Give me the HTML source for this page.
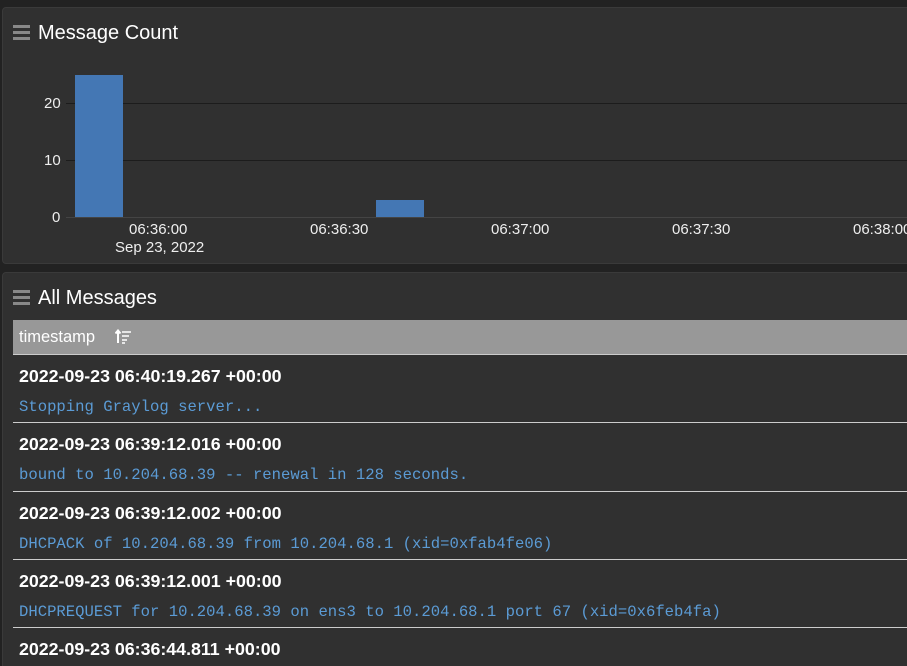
<!DOCTYPE html>
<html style="overflow:hidden"><head><style>
html,body{overflow:hidden}
body{margin:0;width:907px;height:666px;overflow:hidden;background:#222;font-family:"Liberation Sans",sans-serif;color:#fff;position:relative}
.p{position:absolute;left:2px;width:920px;background:#303030;border:1px solid #3a3a3a;border-radius:4px}
.t{position:absolute;left:38px;font-size:20px;color:#fff}
.ham{position:absolute;left:13px;width:17px;height:3px;background:#888;box-shadow:0 6px 0 #888,0 12px 0 #888}
.ax{position:absolute;font-size:15px;color:#eee}
.g{position:absolute;left:66px;width:850px;height:1px;background:#1c1c1c}
.row{position:absolute;left:13px;width:900px;border-top:1px solid #ccc;height:68px}
.ts{position:absolute;left:6px;top:11px;font-weight:bold;font-size:17.8px}
.m{position:absolute;left:6px;top:43px;font-family:"Liberation Mono",monospace;font-size:15.6px;color:#5b9bd5}
</style></head><body>
<div class="p" style="top:7px;height:255px"></div>
<div class="ham" style="top:25px"></div>
<div class="t" style="top:22px">Message Count</div>
<div class="g" style="top:103px"></div>
<div class="g" style="top:160px"></div>
<div class="g" style="top:217px;background:#444"></div>
<div class="ax" style="top:95px;left:44px">20</div>
<div class="ax" style="top:152px;left:44px">10</div>
<div class="ax" style="top:209px;left:52px">0</div>
<div style="position:absolute;left:75px;top:75px;width:48px;height:142px;background:#4477b4"></div>
<div style="position:absolute;left:376px;top:200px;width:48px;height:17px;background:#4477b4"></div>
<div class="ax" style="top:221px;left:129px">06:36:00</div>
<div class="ax" style="top:239px;left:115px">Sep 23, 2022</div>
<div class="ax" style="top:221px;left:310px">06:36:30</div>
<div class="ax" style="top:221px;left:491px">06:37:00</div>
<div class="ax" style="top:221px;left:672px">06:37:30</div>
<div class="ax" style="top:221px;left:853px">06:38:00</div>

<div class="p" style="top:272px;height:400px"></div>
<div class="ham" style="top:290px"></div>
<div class="t" style="top:287px">All Messages</div>
<div style="position:absolute;left:13px;top:320px;width:900px;height:34px;background:#989898"></div>
<div style="position:absolute;left:19px;top:328px;font-size:16.5px;color:#fff">timestamp</div>
<svg style="position:absolute;left:115px;top:329px" width="17" height="16" viewBox="0 0 17 16"><path d="M3 14V2M0.5 4.5L3 1.5L5.5 4.5" stroke="#fff" stroke-width="2" fill="none"/><path d="M7 3h9M7 7h7M7 11h5M7 14h3" stroke="#fff" stroke-width="1.6"/></svg>
<div class="row" style="top:354px"><div class="ts">2022-09-23 06:40:19.267 +00:00</div><div class="m">Stopping Graylog server...</div></div>
<div class="row" style="top:422px"><div class="ts">2022-09-23 06:39:12.016 +00:00</div><div class="m">bound to 10.204.68.39 -- renewal in 128 seconds.</div></div>
<div class="row" style="top:491px"><div class="ts">2022-09-23 06:39:12.002 +00:00</div><div class="m">DHCPACK of 10.204.68.39 from 10.204.68.1 (xid=0xfab4fe06)</div></div>
<div class="row" style="top:559px"><div class="ts">2022-09-23 06:39:12.001 +00:00</div><div class="m">DHCPREQUEST for 10.204.68.39 on ens3 to 10.204.68.1 port 67 (xid=0x6feb4fa)</div></div>
<div class="row" style="top:627px;height:30px"><div class="ts">2022-09-23 06:36:44.811 +00:00</div></div>
</body></html>
